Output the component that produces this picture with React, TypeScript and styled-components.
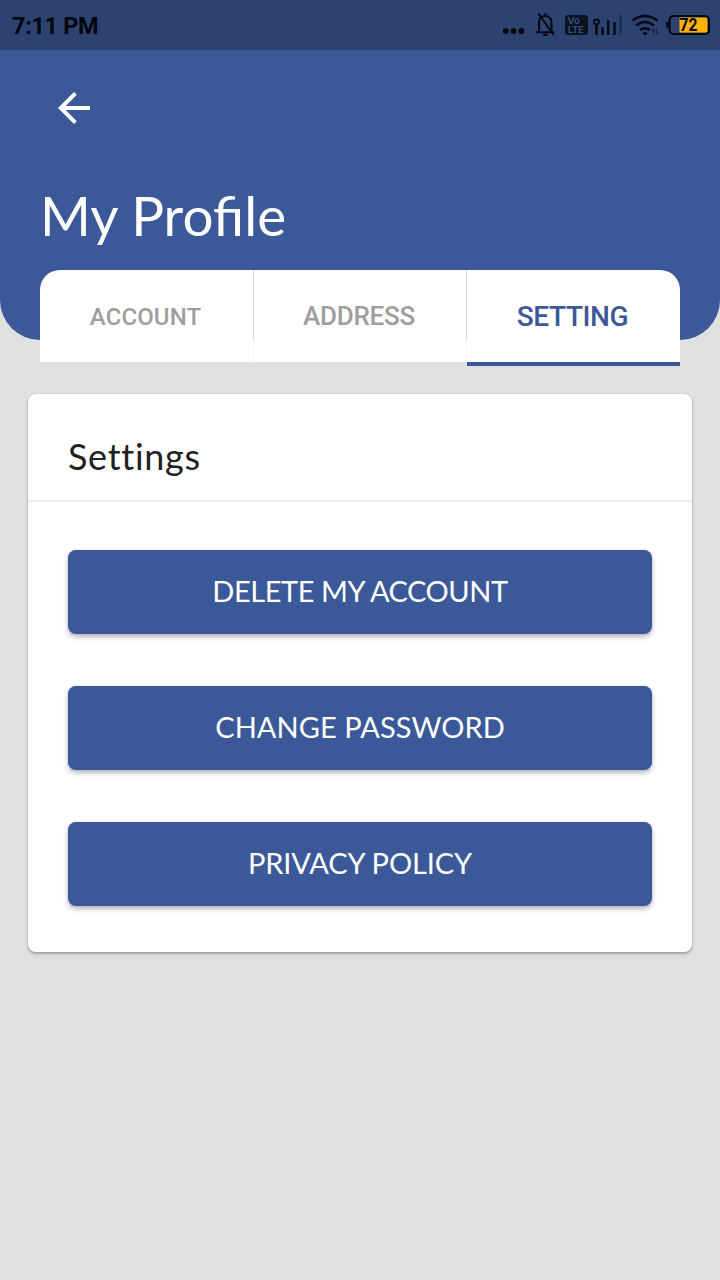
import React from "react";
import styled, { createGlobalStyle } from "styled-components";

const BLUE = "#3b5998";

const GlobalStyle = createGlobalStyle`
  * { box-sizing: border-box; }
  body { margin: 0; background: #e0e0e0; }
`;

const Screen = styled.div`
  width: 720px;
  min-height: 1280px;
  background: #e0e0e0;
  font-family: Lato, "Open Sans", sans-serif;
`;

const StatusBar = styled.div`
  height: 50px;
  padding: 0 10px 0 12px;
  display: flex;
  align-items: center;
  justify-content: space-between;
  background: #2c4372;
`;

const Clock = styled.span`
  font: 700 23.5px/50px Roboto, sans-serif;
  letter-spacing: -0.35px;
  color: #03060c;
  padding-top: 2px;
`;

const StatusIcons = styled.svg`
  display: block;
  width: 210px;
  height: 50px;
`;

const Header = styled.header`
  height: 290px;
  padding: 34px 40px 0;
  background: ${BLUE};
  border-radius: 0 0 40px 40px;
`;

const BackButton = styled.button`
  display: block;
  width: 48px;
  height: 48px;
  margin-left: 10px;
  padding: 0;
  border: 0;
  background: none;
`;

const Title = styled.h1`
  margin: 47px 0 0;
  font-size: 54.8px;
  line-height: 72px;
  font-weight: 400;
  font-variant-ligatures: common-ligatures;
  color: #fff;
`;

const Tabs = styled.nav`
  display: grid;
  grid-template-columns: 213px 1px 212px 1px 213px;
  width: 640px;
  height: 96px;
  margin: -70px auto 0;
`;

const Tab = styled.div<{ $size: number; $spacing: number; $drop?: number; $active?: boolean; $corner?: string }>`
  height: ${(p) => (p.$active ? 96 : 92)}px;
  padding-top: ${(p) => p.$drop ?? 0}px;
  padding-right: 2px;
  border-bottom: ${(p) => (p.$active ? `4px solid ${BLUE}` : "0")};
  border-radius: ${(p) => p.$corner ?? "0"};
  background: #fff;
  display: flex;
  align-items: center;
  justify-content: center;
  font-family: Roboto, sans-serif;
  font-weight: 500;
  font-size: ${(p) => p.$size}px;
  letter-spacing: ${(p) => p.$spacing}px;
  color: ${(p) => (p.$active ? BLUE : "#9e9e9e")};
`;

const TabDivider = styled.span`
  height: 92px;
  background: linear-gradient(#d0d7e5 70px, #f6f6f6 70px);
`;

const Card = styled.section`
  margin: 28px 28px 0;
  height: 558px;
  border-radius: 8px;
  background: #fff;
  box-shadow: 0 2px 3px rgba(0, 0, 0, 0.28), 0 0 2px rgba(0, 0, 0, 0.1);
`;

const CardTitle = styled.h2`
  margin: 0;
  height: 108px;
  padding: 40px 40px 0;
  border-bottom: 2px solid #eee;
  font-size: 36px;
  line-height: 44px;
  font-weight: 400;
  letter-spacing: 0.7px;
  color: #212121;
`;

const Actions = styled.div`
  display: flex;
  flex-direction: column;
  gap: 52px;
  padding: 48px 40px 0;
`;

const Action = styled.button<{ $spacing: number }>`
  height: 84px;
  padding: 0 0 2px;
  border: 0;
  border-radius: 8px;
  background: ${BLUE};
  box-shadow: 0 3px 5px rgba(0, 0, 0, 0.28), 0 0 2px rgba(0, 0, 0, 0.1);
  font: 400 29px/82px Lato, sans-serif;
  letter-spacing: ${(p) => p.$spacing}px;
  color: #fff;
`;

function PhoneStatus() {
  return (
    <StatusIcons viewBox="500 0 210 50" fill="none">
      <g fill="#05080f">
        <circle cx="505.7" cy="31" r="2.9" />
        <circle cx="513.5" cy="31" r="2.9" />
        <circle cx="521.3" cy="31" r="2.9" />
      </g>
      <g stroke="#05080f" strokeWidth="2">
        <path d="M536 32.200h18.500M539 32V22.500c0-4 2.300-6.500 6-6.500s6.500 2.500 6.500 6.500V32M545.500 13.200v3M538.500 13.500l15 21.500" />
        <path d="M543 34.800h4.500" />
      </g>
      <rect x="565" y="15" width="23" height="20" rx="3.500" fill="#0b1220" />
      <g fill="#35507f" fontFamily="Inter, sans-serif" fontWeight="700">
        <text x="567.500" y="24.300" fontSize="9.500">Vo</text>
        <text x="568" y="33.200" fontSize="9">LTE</text>
      </g>
      <g stroke="#05080f" strokeWidth="2.500">
        <circle cx="596.500" cy="22" r="2.500" strokeWidth="1.800" />
        <path d="M596.500 24v11M602.500 27v8M608.200 20.500V35M614.500 22V35" />
        <path d="M620.500 15v20" stroke="#1b2c4f" />
      </g>
      <g stroke="#05080f" strokeWidth="2.400">
        <path d="M632.500 20.500q12.500-9 25 0M636 25.500q9-7 18 0M640 30q5-3.600 10 0" />
      </g>
      <ellipse cx="645" cy="33.500" rx="2.300" ry="1.600" fill="#05080f" />
      <path d="M653.500 28.500v6M656.500 28.500v6M652 30.500l1.500-2M656.500 34.500l1.500-2" stroke="#14213d" strokeWidth="1.200" />
      <rect x="679.500" y="17.500" width="28" height="15" rx="1" fill="#ffb300" />
      <rect x="669.500" y="16" width="39.500" height="18" rx="4" stroke="#05080f" strokeWidth="2.200" />
      <path d="M667.500 22v6" stroke="#05080f" strokeWidth="2.400" />
      <text x="679.500" y="31" fontFamily="Roboto, sans-serif" fontWeight="700" fontSize="18" textLength="18" lengthAdjust="spacingAndGlyphs" fill="#05080f">72</text>
    </StatusIcons>
  );
}

export default function App() {
  return (
    <Screen>
      <GlobalStyle />
      <StatusBar>
        <Clock>7:11 PM</Clock>
        <PhoneStatus />
      </StatusBar>
      <Header>
        <BackButton aria-label="Back">
          <svg width="48" height="48" viewBox="0 0 24 24" fill="#fff">
            <path d="M20 11H7.830l5.590-5.590L12 4l-8 8 8 8 1.410-1.410L7.830 13H20v-2z" />
          </svg>
        </BackButton>
        <Title>My Profile</Title>
      </Header>
      <Tabs>
        <Tab $size={24} $spacing={0.1} $drop={2} $corner="20px 0 0 0">ACCOUNT</Tab>
        <TabDivider />
        <Tab $size={26} $spacing={-0.25}>ADDRESS</Tab>
        <TabDivider />
        <Tab $size={28} $spacing={-0.4} $active $corner="0 20px 0 0">SETTING</Tab>
      </Tabs>
      <Card>
        <CardTitle>Settings</CardTitle>
        <Actions>
          <Action $spacing={-0.45}>DELETE MY ACCOUNT</Action>
          <Action $spacing={0.05}>CHANGE PASSWORD</Action>
          <Action $spacing={-0.12}>PRIVACY POLICY</Action>
        </Actions>
      </Card>
    </Screen>
  );
}
